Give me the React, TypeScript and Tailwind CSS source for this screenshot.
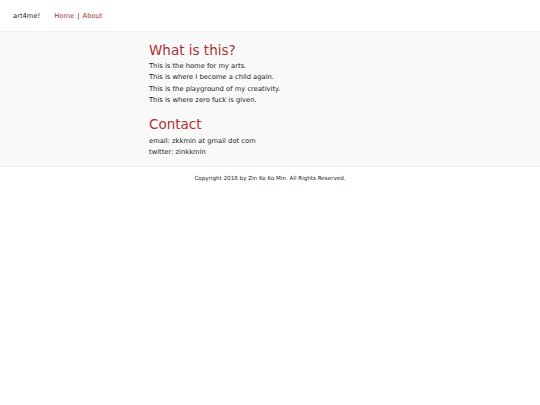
export default function App() {
  return (
    <div className="min-h-screen bg-white text-[6.75px] text-[#222] font-['DejaVu_Sans',sans-serif]">
      <header className="h-[32px] flex items-center px-[13px] pt-[2px] border-b border-[#f0f0f0]">
        <span className="mr-[14px]">art4me!</span>
        <nav className="flex items-center gap-[3px]">
          <a className="text-[#a33]">Home</a>
          <span>|</span>
          <a className="text-[#a33]">About</a>
        </nav>
      </header>
      <main className="bg-[#f9f9f9] border-b border-[#eee] pt-[10px] pb-[7px]">
        <div className="w-[242px] mx-auto leading-[11.3px]">
          <h1 className="text-[13.5px] leading-[17px] text-[#a33] mb-[2px]">What is this?</h1>
          <p>This is the home for my arts.</p>
          <p>This is where I become a child again.</p>
          <p>This is the playground of my creativity.</p>
          <p>This is where zero fuck is given.</p>
          <h1 className="text-[13.5px] leading-[17px] text-[#a33] mt-[10px] mb-[3px]">Contact</h1>
          <p>email: zkkmin at gmail dot com</p>
          <p>twitter: zinkkmin</p>
        </div>
      </main>
      <footer className="text-center text-[5.6px] leading-[8px] pt-[7px]">
        Copyright 2018 by Zin Ko Ko Min. All Rights Reserved.
      </footer>
    </div>
  );
}
